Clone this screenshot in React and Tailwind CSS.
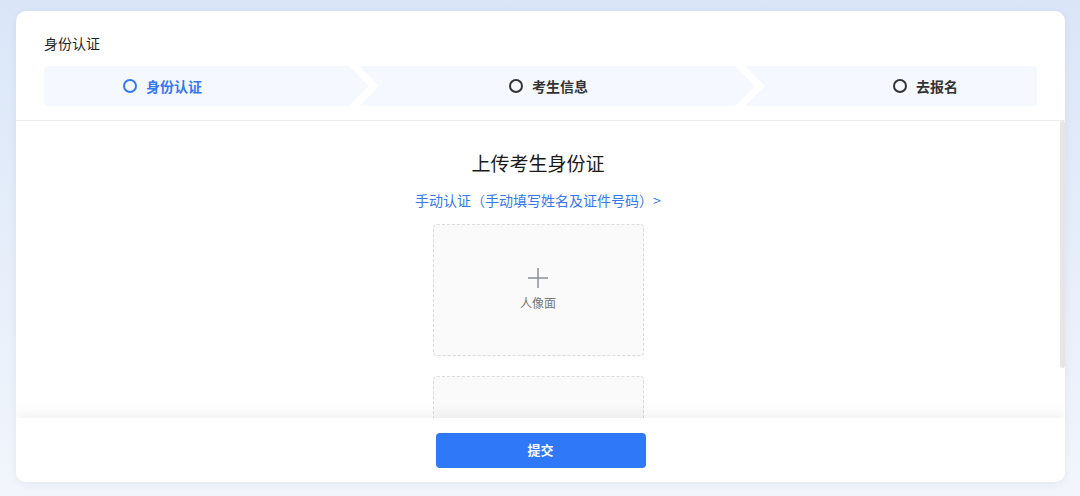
const steps = [
  {
    label: "身份认证",
    active: true,
    cls: "w-[325px] pl-[79px] rounded-l-[4px] [clip-path:polygon(0_0,calc(100%_-_20px)_0,100%_50%,calc(100%_-_20px)_100%,0_100%)]",
  },
  {
    label: "考生信息",
    cls: "ml-[-10px] w-[396px] pl-[150px] [clip-path:polygon(0_0,calc(100%_-_20px)_0,100%_50%,calc(100%_-_20px)_100%,0_100%,20px_50%)]",
  },
  {
    label: "去报名",
    cls: "ml-[-10px] flex-1 pl-[148px] rounded-r-[4px] [clip-path:polygon(0_0,100%_0,100%_100%,0_100%,20px_50%)]",
  },
];

function UploadBox({ label }) {
  return (
    <div className="w-[211px] h-[132px] shrink-0 rounded-[4px] border border-dashed border-[#dcdcdc] bg-[#fafafa] flex flex-col items-center justify-center">
      {label && (
        <>
          <svg width="22" height="22" viewBox="0 0 22 22" className="mt-[-2px]">
            <path d="M11 1v20M1 11h20" stroke="#8c9099" strokeWidth="1.5" fill="none" />
          </svg>
          <span className="mt-[6px] text-[12px] leading-[16px] text-[#777]">{label}</span>
        </>
      )}
    </div>
  );
}

export default function App() {
  return (
    <div className="w-full h-[496px] overflow-hidden bg-linear-to-b from-[#dae6f8] to-[#f2f6fc] pt-[11px] pl-[16px] font-['Noto_Sans_CJK_SC','Noto_Sans',sans-serif]">
      <div className="relative w-[1049px] h-[471px] bg-white rounded-[10px] shadow-[0_2px_10px_rgba(0,0,0,0.06)] overflow-hidden flex flex-col">
        <div className="px-[28px] pt-[22px] pb-[14px] border-b border-[#ececec]">
          <h1 className="text-[14px] leading-[20px] font-normal text-[#1f1f1f]">身份认证</h1>
          <div className="mt-[13px] flex h-[40px]">
            {steps.map((s) => (
              <div key={s.label} className={`h-full bg-[#f5f9ff] flex items-center ${s.cls}`}>
                <span
                  className={`w-[14px] h-[14px] rounded-full border-2 ${s.active ? "border-[#3478f6]" : "border-[#333]"}`}
                />
                <span
                  className={`ml-[9px] text-[14px] font-bold ${s.active ? "text-[#3478f6]" : "text-[#333]"}`}
                >
                  {s.label}
                </span>
              </div>
            ))}
          </div>
        </div>

        <div className="flex-1 overflow-hidden">
          <div className="flex flex-col items-center pt-[29px] pr-[5px]">
            <h2 className="text-[19px] leading-[26px] font-normal text-[#1a1a1a]">上传考生身份证</h2>
            <a className="mt-[14px] text-[14px] leading-[20px] text-[#3478f6] cursor-pointer">
              手动认证（手动填写姓名及证件号码）&gt;
            </a>
            <div className="mt-[14px] flex flex-col gap-[20px]">
              <UploadBox label="人像面" />
              <UploadBox />
            </div>
          </div>
        </div>

        {/* scrollbar thumb */}
        <div className="absolute right-0 top-[110px] w-[5px] h-[247px] rounded-[3px] bg-[#e6e6e6]" />

        <div className="absolute left-0 right-0 bottom-0 h-[64px] bg-white shadow-[0_-6px_12px_rgba(0,0,0,0.05)] flex items-center justify-center">
          <button className="w-[210px] h-[35px] rounded-[4px] bg-[#2f78f7] text-white text-[13px] font-bold">
            提交
          </button>
        </div>
      </div>
    </div>
  );
}
